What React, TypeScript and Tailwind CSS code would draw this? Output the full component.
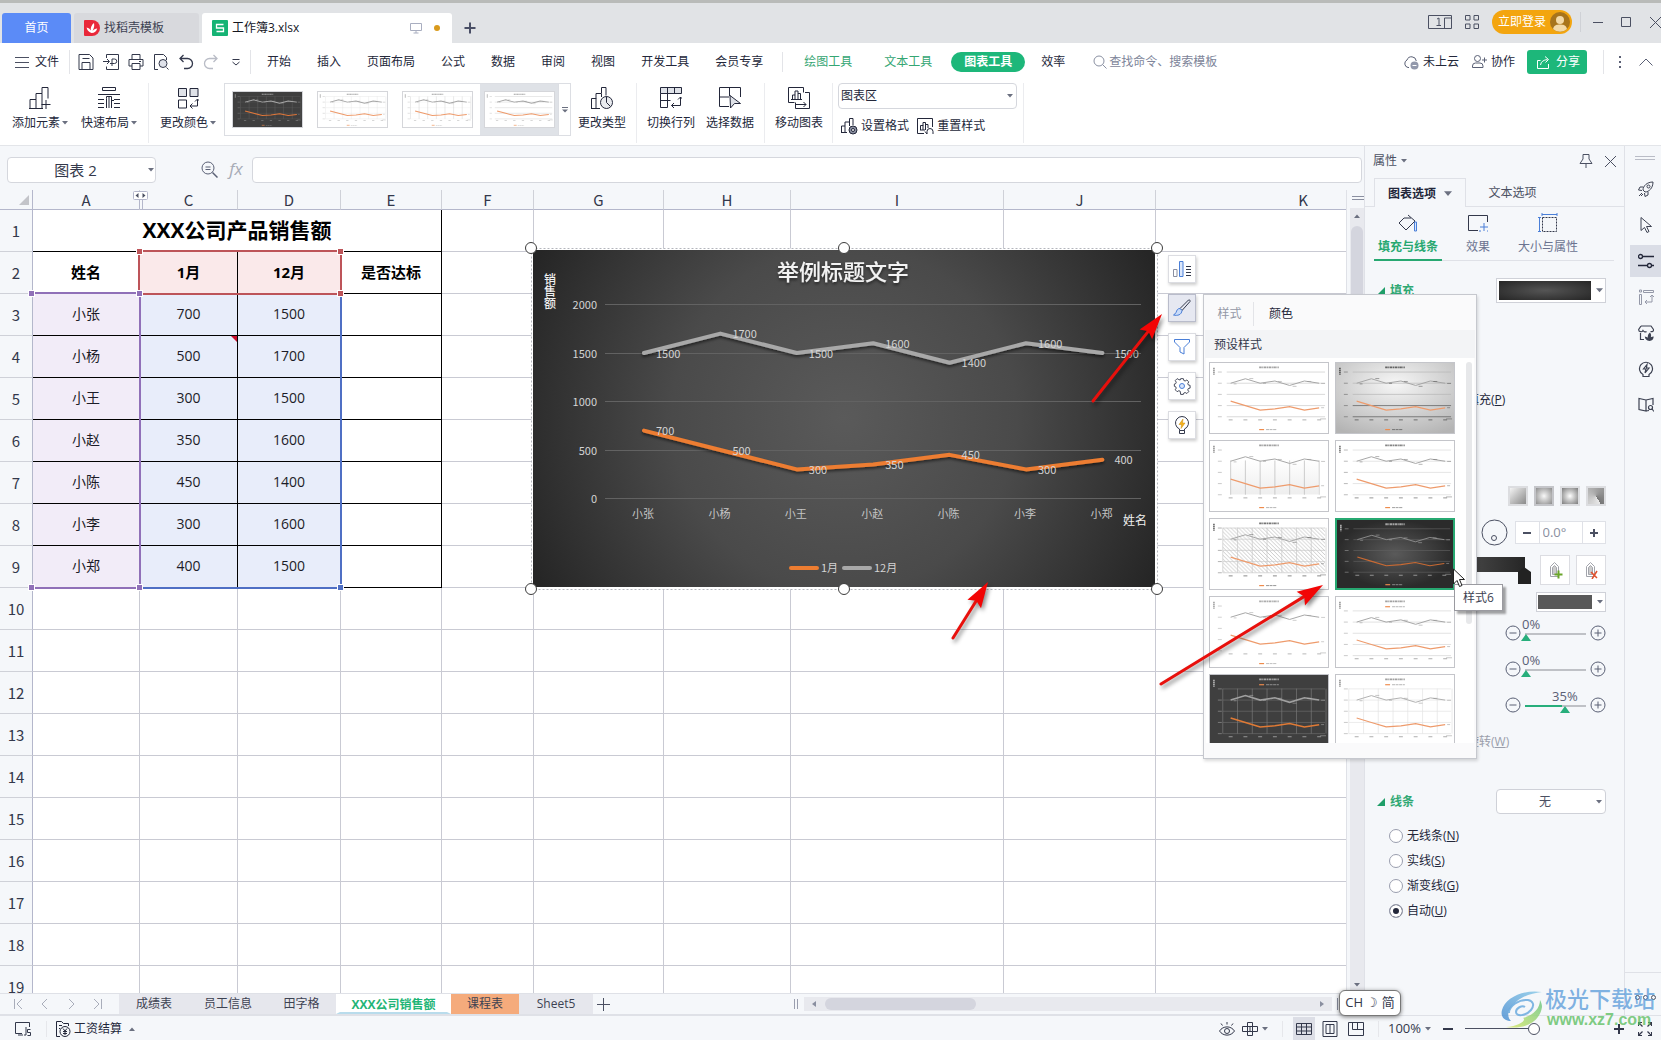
import React from 'react';

type P = { children?: React.ReactNode; className?: string };

function Ico({ s = 16, w, vb = '0 0 16 16', sw = 1, className = '', children }: P & { s?: number; w?: number; vb?: string; sw?: number }) {
  return (
    <svg aria-hidden="true" width={w ?? s} height={s} viewBox={vb} fill="none" stroke="currentColor" strokeWidth={sw} className={`shrink-0 ${className}`}>
      {children}
    </svg>
  );
}

function Caret({ className = 'text-[#6b7080]', up = false, s = 6 }: { className?: string; up?: boolean; s?: number }) {
  return (
    <svg aria-hidden="true" width={s} height={s - 2} viewBox="0 0 6 4" className={`shrink-0 ${className}`}>
      <path d={up ? 'M0 4h6L3 .5z' : 'M0 0h6L3 3.5z'} fill="currentColor" />
    </svg>
  );
}

function Sep({ className = 'h-6 bg-[#dfe0e4]' }: P) {
  return <span className={`w-px shrink-0 ${className}`} />;
}

const menus = ['开始', '插入', '页面布局', '公式', '数据', '审阅', '视图', '开发工具', '会员专享'];

function TitleBar() {
  return (
    <header className="flex h-[43px] shrink-0 items-end border-t-[3px] border-[#b9bbb9] bg-[#e1e3e6] pl-0.5">
      <button className="h-[30px] w-[69px] rounded-t-[3px] bg-[#5b8bf7] text-white">首页</button>
      <button className="ml-[3px] flex h-[30px] w-[125px] items-center gap-1 rounded-t-[3px] bg-[#d8d9dd] pl-2.5 text-[#3d4252]">
        <Ico s={16} className="text-white">
          <path d="M1 0h7a8 8 0 0 1 0 16H1a1 1 0 0 1-1-1V1a1 1 0 0 1 1-1z" fill="#e9283a" stroke="none" />
          <path d="M7.500 13C4.500 12 3 10 2.600 7.500c2 .3 3.400 1.500 4.200 3C6.500 7.500 7.500 5 10 3c.5 2.500.3 5-1.500 8 1.200-1.500 2.700-2.500 4.700-2.600-.5 2.800-2.700 4.300-5.700 4.600z" fill="#fff" stroke="none" />
        </Ico>
        找稻壳模板
      </button>
      <div className="ml-[3px] flex h-[30px] w-[250px] items-center rounded-t-[3px] bg-white pl-2.5 text-[#15171f]">
        <Ico s={16}>
          <rect width="16" height="16" rx="1" fill="#15b374" stroke="none" />
          <path d="M11.500 4.500h-7v3.500h7v3.500h-7" stroke="#fff" strokeWidth="1.300" />
        </Ico>
        <span className="ml-1 flex-1 text-left">工作簿3.xlsx</span>
        <Ico s={12} vb="0 0 12 12" className="text-[#a9aec0]">
          <path d="M.5 1.500h11v7H.5zM3.500 11h5M6 8.500V11" />
        </Ico>
        <span className="mx-3 size-1.5 rounded-full bg-[#d99a1c]" />
      </div>
      <button aria-label="新建" className="ml-3 grid h-[30px] w-3 place-items-center text-[#4a4f66]">
        <Ico s={12} vb="0 0 12 12" sw={2}><path d="M6 .5v11M.5 6h11" /></Ico>
      </button>
      <div className="ml-auto flex h-10 items-center pb-0.5 text-[#4b5062]">
        <button aria-label="窗口布局"><Ico w={24} s={14} vb="0 0 24 14"><path d="M.5.5h23v13H.5zM16.500 13.500V3h7M9 4l2-1v7.500M8.500 10.500H13" /></Ico></button>
        <button aria-label="应用" className="ml-[13px]"><Ico s={14} vb="0 0 14 14"><path d="M.5.5h4.500v4.500H.5zM9 .5h4.500v4.500H9zM.5 9h4.500v4.500H.5zM9 9h4.500v4.500H9z" /></Ico></button>
        <button className="ml-[13px] flex h-6 w-20 items-center gap-1 rounded-full bg-[#f3a50f] pl-1.5 text-white">
          立即登录
          <Ico s={20} vb="0 0 20 20">
            <circle cx="10" cy="10" r="10" fill="#a8741c" stroke="none" />
            <circle cx="10" cy="8" r="4" fill="#f3d9a8" stroke="none" />
            <path d="M3 17c1-4 4-4.500 7-4.500s6 .5 7 4.500a10 10 0 0 1-14 0z" fill="#f3d9a8" stroke="none" />
          </Ico>
        </button>
        <Sep className="ml-2 h-5 bg-[#cfd1d6]" />
        <button aria-label="最小化" className="ml-3"><Ico s={10} vb="0 0 10 10"><path d="M0 5.500h10" /></Ico></button>
        <button aria-label="最大化" className="ml-[18px]"><Ico s={10} vb="0 0 10 10"><path d="M.5.5h9v9h-9z" /></Ico></button>
        <button aria-label="关闭" className="ml-[19px]"><Ico s={11} vb="0 0 11 11"><path d="M0 0l11 11M11 0L0 11" /></Ico></button>
      </div>
    </header>
  );
}

function MenuBar() {
  return (
    <nav className="flex h-[37px] shrink-0 items-center bg-white pt-px pl-[15px] text-[#23273a]">
      <button className="flex items-center gap-1.5">
        <Ico s={14} vb="0 0 14 14" className="text-[#4b5062]"><path d="M0 2.500h14M0 7.500h14M0 12.500h14" /></Ico>文件
      </button>
      <Sep className="mr-2 ml-2.5 h-6 bg-[#e3e4e8]" />
      <div className="flex items-center gap-[9px] text-[#33384b]">
        <button aria-label="保存"><Ico><path d="M1 .5h10.500l3.500 3.500V15.500H1zM4 15.500V8.500h8v7M4.500 4.500h7" /></Ico></button>
        <button aria-label="输出"><Ico><path d="M3.500 4V.5h12v15h-12v-3M0 7.500h6M4 5l2.500 2.500L4 10M9 12V5h2.500a2.200 2.200 0 0 1 0 4.500H7" /></Ico></button>
        <button aria-label="打印"><Ico><path d="M4 5V.5h8V5M4 12H1V5.500h14V12h-3M4 9.500h8v6H4zM11 7.500h2" /></Ico></button>
        <button aria-label="打印预览"><Ico><path d="M5 15.500H1.500V.5h9l3 3V6M13.500 13.500l2 2" /><circle cx="10" cy="9.500" r="4" fill="#dfe2ea" /></Ico></button>
        <button aria-label="撤销"><Ico sw={1.3}><path d="M5.500 1L2 4.500 5.500 8M2 4.500h7.500a5 5 0 0 1 0 10H6" /></Ico></button>
        <button aria-label="恢复" className="text-[#b9bcc6]"><Ico sw={1.3}><path d="M10.500 1L14 4.500 10.500 8M14 4.500H6.500a5 5 0 0 0 0 10H10" /></Ico></button>
        <button aria-label="自定义"><Ico><path d="M4.500 5.500h7M4.500 8L8 11l3.500-3" /></Ico></button>
      </div>
      <Sep className="ml-1.5 h-6 bg-[#e3e4e8]" />
      <div className="ml-[3px] flex">
        {menus.map((m) => <button key={m} className="px-[13px]">{m}</button>)}
      </div>
      <Sep className="ml-1.5 h-5 bg-[#e3e4e8]" />
      <button className="ml-[21px] text-[#35a673]">绘图工具</button>
      <button className="ml-8 text-[#35a673]">文本工具</button>
      <button className="ml-[19px] h-5 rounded-full bg-[#1db77a] px-[13px] font-bold text-white">图表工具</button>
      <button className="ml-4">效率</button>
      <label className="ml-7 flex items-center gap-0.5 text-[#8a90a2]">
        <Ico s={14} vb="0 0 14 14"><circle cx="6" cy="6" r="5" /><path d="M9.500 9.500l4 4" /></Ico>
        <input aria-label="查找命令" placeholder="查找命令、搜索模板" className="w-[116px] bg-transparent outline-none placeholder:text-[#7d8499]" />
      </label>
      <div className="ml-auto flex items-center">
        <button className="flex items-center gap-1">
          <Ico className="text-[#5a6075]"><path d="M6 13.500H5A4 4 0 0 1 4 6a4.800 4.800 0 0 1 9.300 1" /><circle cx="11.500" cy="11.500" r="4" fill="#9298ab" stroke="none" /><path d="M9.500 11.500h4" stroke="#fff" /></Ico>未上云
        </button>
        <button className="ml-3 flex items-center gap-1">
          <Ico className="text-[#5a6075]"><circle cx="6.500" cy="4.500" r="3" /><path d="M1.500 13.500V12a3 3 0 0 1 3-3H9a3 3 0 0 1 3 3v1.500zM11 6h5M13.500 3.500v5" /></Ico>协作
        </button>
        <button className="ml-3 flex h-6 w-[60px] items-center gap-1.5 rounded-[3px] bg-[#1db77a] pl-2.5 text-white">
          <Ico s={13} vb="0 0 13 13"><path d="M3.500 4.500h-3v8h11V8M3.500 9c.5-3.500 3-5 7-5.500M8 .5l3.500 3L8.500 6.500" /></Ico>分享
        </button>
        <Sep className="ml-4 h-6 bg-[#e3e4e8]" />
        <button aria-label="更多" className="ml-[15px] flex flex-col gap-[3px]">
          {[0, 1, 2].map((i) => <span key={i} className="size-0.5 bg-[#5a6075]" />)}
        </button>
        <button aria-label="收起" className="mr-2 ml-[18px]"><Ico s={14} vb="0 0 14 14" className="text-[#5a6075]"><path d="M.5 10.500L7 4l6.500 6.500" /></Ico></button>
      </div>
    </nav>
  );
}

function Big({ label, caret, children }: { label: string; caret?: boolean; children: React.ReactNode }) {
  return (
    <button className="flex h-12 flex-col items-center justify-between text-[#23273a]">
      <Ico s={22} vb="0 0 22 22" className="mt-1">{children}</Ico>
      <span className="flex items-center gap-0.5 leading-4">{label}{caret && <Caret />}</span>
    </button>
  );
}

type ThumbKind = { bg: string; h?: string; v?: string; mark?: string; gray?: string; org?: string; hatch?: boolean; thick?: number; area?: boolean; top?: boolean };
const jan = [700, 500, 300, 350, 450, 300, 400];
const dec = [1500, 1700, 1500, 1600, 1400, 1600, 1500];

function Thumb({ k, id, className }: { k: ThumbKind; id: string; className: string }) {
  const dy = k.top ? 5 : 0;
  const pts = (a: number[]) => a.map((v, i) => `${21 + i * 15},${55.3 + dy - v * 0.023}`).join(' ');
  const mark = k.mark ?? '#8a8a8a';
  return (
    <svg aria-hidden="true" viewBox="0 0 120 72" preserveAspectRatio="none" className={className}>
      <defs>
        <radialGradient id={`${id}d`}><stop offset="0" stopColor="#5a5a5a" /><stop offset="1" stopColor="#2b2b2b" /></radialGradient>
        <radialGradient id={`${id}l`} cx="0.5" cy="0.3" r="0.8"><stop offset="0" stopColor="#f6f6f6" /><stop offset="1" stopColor="#b4b4b4" /></radialGradient>
        <pattern id={`${id}h`} width="4" height="4" patternUnits="userSpaceOnUse"><path d="M0 0l4 4" stroke="#b5b5b5" strokeWidth="0.700" /></pattern>
        <linearGradient id={`${id}a`} x2="0" y2="1"><stop offset="0" stopColor="#fff" /><stop offset="1" stopColor="#eee" /></linearGradient>
      </defs>
      <rect width="120" height="72" fill={k.bg === 'dark' ? `url(#${id}d)` : k.bg === 'light' ? `url(#${id}l)` : k.bg} />
      {k.hatch && <rect x="13" y="9" width="104" height="46" fill={`url(#${id}h)`} />}
      {k.area && <rect x="21" y="18" width="89" height="37" fill={`url(#${id}a)`} />}
      {k.h && [0, 1, 2, 3, 4].map((i) => <path key={i} d={`M${k.v ? 13 : 17} ${9.3 + dy + i * 11.5}H117`} stroke={k.bg === 'light' && i > 2 ? '#555' : k.h} strokeWidth="0.700" />)}
      {k.v && [0, 1, 2, 3, 4, 5, 6, 7].map((i) => <path key={i} d={`M${(k.area ? 21 : 13) + i * 15} ${(k.area ? 20 : 9) + dy}V${55.3 + dy}`} stroke={k.v} strokeWidth="0.700" visibility={k.area && i === 7 ? 'hidden' : 'visible'} />)}
      <polyline points={pts(dec)} fill="none" stroke={k.gray ?? '#a5a5a5'} strokeWidth={k.thick ?? 1} />
      <polyline points={pts(jan)} fill="none" stroke={k.org ?? '#ee9b6c'} strokeWidth={k.thick ?? 1.2} />
      <path d="M50 4.500h20" stroke={mark} strokeWidth="2" strokeDasharray="2.600 .5 1.200 .5" opacity=".8" />
      <path d="M4 5v7" stroke={mark} strokeWidth="1.500" strokeDasharray="1.500 .5" />
      <path d={`M19 ${58.5 + dy}h96`} stroke={mark} strokeWidth="1" strokeDasharray="4 11" opacity=".7" />
      <path d={k.top ? 'M50 10h5' : 'M50 68.500h5'} stroke="#ee8b4c" strokeWidth="1.200" />
      <path d={k.top ? 'M57 10h13' : 'M57 68.500h11'} stroke={mark} strokeWidth="0.900" strokeDasharray="3 .6" opacity=".7" />
      {[0, 1, 2, 3, 4].map((i) => <path key={i} d={`M8 ${9.3 + dy + i * 11.5}h4`} stroke={mark} strokeWidth="0.900" opacity=".5" />)}
      <path d={`M24 ${21.5 + dy}h3M40 ${16 + dy}h4M54 ${21 + dy}h3M69 ${19 + dy}h4M84 ${24 + dy}h4M99 ${19 + dy}h4M113 ${21 + dy}h4M113 ${46 + dy}h3M112 ${57.5 + dy}h6`} stroke={mark} strokeWidth="0.800" opacity=".6" />
    </svg>
  );
}

const gallery: ThumbKind[] = [
  { bg: '#3f3f3f', h: '#5c5c5c', v: '#6a6a6a', mark: '#bbb', gray: '#a8a8a8', org: '#e0773a', thick: 2 },
  { bg: '#fff', h: '#e2e2e2', v: '#e2e2e2', thick: 2 },
  { bg: '#fff', h: '#eee', v: '#c4c4c4', thick: 2 },
  { bg: '#fff', h: '#c4c4c4', thick: 2 },
];

function Ribbon() {
  return (
    <div className="flex h-[66px] shrink-0 items-start border-b border-[#e3e5e9] bg-white pt-[3px] pl-3">
      <Big label="添加元素" caret><path d="M1 21.500V12.500h6v9M7 12.500V6.500h6v15M13 6.500V.5h6v11M0 21.500h14M17 13v9M12.500 17.500h9" /></Big>
      <div className="ml-[13px]" />
      <Big label="快速布局" caret><path d="M4.500.5h13v3h-13zM0 7.500h22M0 12.500h6M0 16.500h6M0 20.500h6M16 12.500h6M16 16.500h6M16 20.500h6M8.500 21V11.500M8.500 11.500v-2h5V21M11 9V21M14 13.500h2" /></Big>
      <Sep className="mr-[11px] ml-[11px] h-[60px] bg-[#ebecef]" />
      <Big label="更改颜色" caret><path d="M1.500 1.500h8v8h-8zM13 1.500h8v8h-8z" fill="#dfe2e8" /><path d="M1.500 13h8v8h-8zM20.500 12.500v6.500h-7M18 14.500l2.500-2.500 2.500 2.500M15.500 16.500L13 19l2.500 2.500" /></Big>
      <div className="ml-2 flex h-[53px] border border-[#dcdee3]">
        {gallery.map((k, i) => (
          <button key={i} aria-label={`图表样式${i + 1}`} className={i === 3 ? 'grid w-[78px] place-items-center bg-[#dfe2e7]' : 'grid w-[85px] place-items-center'}>
            <Thumb k={k} id={`g${i}`} className="h-[37px] w-[71px] border border-[#d5d6da]" />
          </button>
        ))}
        <button aria-label="更多样式" className="grid w-3 place-items-center border-l border-[#dcdee3]">
          <Ico s={6} vb="0 0 6 6" className="text-[#6b7080]"><path d="M0 .5h6" /><path d="M0 2.500h6L3 5.500z" fill="currentColor" stroke="none" /></Ico>
        </button>
      </div>
      <div className="w-[7px]" />
      <Big label="更改类型"><path d="M.5 21V11.500h4.500V21M5 12V6.500h5.500V.5H15v8M0 21.500h9M10.500 7v3" /><circle cx="15.500" cy="15.500" r="6" fill="#e9ebef" /><path d="M15.500 9.500v6l4 4" /></Big>
      <Sep className="mx-[10px] h-[60px] bg-[#ebecef]" />
      <Big label="切换行列"><path d="M.5.500h21v6H.5z" fill="#dfe2e8" /><path d="M.5 6.500v14h7M7.500.5v20M14.500.5v6M.5 13.500h10M20.500 10v8.500h-9M18 12.500l2.500-2.500 2.500 2.500M14 16l-2.500 2.500L14 21" /></Big>
      <div className="w-[11px]" />
      <Big label="选择数据"><path d="M10 19.500H.5V.5h21V10M.5 10h9.500M10.500.5V9" /><path d="M11 8.500l10.500 8h-6L11.500 21z" fill="#dfe2e8" /></Big>
      <Sep className="mx-[10px] h-[60px] bg-[#ebecef]" />
      <Big label="移动图表"><path d="M15.500 5.500V.5H.5v15h6M17 5.500h4.500v16h-14v-6M3 12.500h11M4.500 12.500V8h2.500v4.500M7 8V4h3v8.500M10 6.500h2.500v6M7 17.500h11M15.500 15l2.500 2.500-2.500 2.500" /></Big>
      <Sep className="mr-[5px] ml-[9px] h-[60px] bg-[#ebecef]" />
      <div className="flex flex-col gap-2 text-[#23273a]">
        <div className="relative w-[179px]">
          <select aria-label="图表元素" className="h-[26px] w-full appearance-none rounded-sm border border-[#d5d7dd] bg-white pl-0.5 outline-none"><option>图表区</option></select>
          <span className="pointer-events-none absolute top-[11px] right-1"><Caret /></span>
        </div>
        <div className="flex gap-2 pl-[3px]">
          <button className="flex items-center gap-[3px] leading-[18px]">
            <Ico s={17} vb="0 0 17 17"><path d="M.5 14.500V8h3.500v6.500M4 8V4h4.500V.5H12V7M0 14.500h6M8.500 4v4" /><circle cx="12" cy="12" r="4" fill="#8a8fa0" /><circle cx="12" cy="12" r="1.500" fill="#fff" /></Ico>设置格式
          </button>
          <button className="flex items-center gap-[3px] leading-[18px]">
            <Ico s={17} vb="0 0 17 17"><path d="M7 15.500H.5V.5h15V9M3.500 12V7.500H6V12M6 8V4.500h2.500V12M8.500 6.500H11V10M3 12h5M10 16v-2.500a3 3 0 0 1 6 0V16M8 13.500l2 2.500" /></Ico>重置样式
          </button>
        </div>
      </div>
      <Sep className="ml-1.5 h-[60px] bg-[#ebecef]" />
    </div>
  );
}

function FormulaBar() {
  return (
    <div className="flex h-11 shrink-0 items-start pt-[11px] pr-0.5 pl-[7px]">
      <div className="relative w-[149px]">
        <input aria-label="名称框" defaultValue="图表 2" className="h-[26px] w-full rounded-sm border border-[#d5d7dd] bg-white pr-3 pb-px text-center text-[15px] text-[#33384b] outline-none" />
        <span className="pointer-events-none absolute top-[11px] right-0.5"><Caret /></span>
      </div>
      <button aria-label="缩小" className="mt-1 ml-[45px] text-[#5a6075]"><Ico s={17} vb="0 0 17 17"><circle cx="7" cy="7" r="6" /><path d="M11.500 11.500l5 5" strokeWidth="1.500" /><path d="M4.500 6h5M4.500 8.500h5" /></Ico></button>
      <button aria-label="插入函数" className="ml-2.5 w-4 text-[17px] leading-6 text-[#a7abb6] italic">fx</button>
      <input aria-label="编辑栏" className="ml-2 h-[26px] min-w-0 flex-1 rounded-sm border border-[#d5d7dd] bg-white px-2 outline-none" />
    </div>
  );
}

const people = ['小张', '小杨', '小王', '小赵', '小陈', '小李', '小郑'];
const cols = ['A', 'C', 'D', 'E', 'F', 'G', 'H', 'I', 'J'];
const K = 'border-black';
const G = 'border-[#c9cad3]';

function Sheet() {
  return (
    <table className="w-full table-fixed border-separate border-spacing-0 bg-white">
      <colgroup>
        <col className="w-[33px]" /><col className="w-[107px]" /><col className="w-[98px]" /><col className="w-[103px]" /><col className="w-[101px]" />
        <col className="w-[92px]" /><col className="w-[130px]" /><col className="w-[127px]" /><col className="w-[213px]" /><col className="w-[152px]" /><col />
      </colgroup>
      <thead>
        <tr className="h-5 bg-[#f5f7fa] font-[Noto_Sans_CJK_SC] text-[15px] leading-[19px] text-[#33384b]">
          <th className="border-r border-b border-[#b4b7cb] p-0"><svg aria-hidden="true" width="10" height="10" className="mr-[3px] ml-auto"><path d="M10 0v10H0z" fill="#c3c4c9" /></svg></th>
          {cols.map((c) => <th key={c} scope="col" className="border-r border-b border-r-[#cfd1d8] border-b-[#b4b7cb] p-0 font-normal">{c}</th>)}
          <th scope="col" className="border-b border-[#b4b7cb] p-0 pl-[104px] font-normal">K</th>
        </tr>
      </thead>
      <tbody className="text-center text-[14px] leading-5 text-[#1c1c28]">
        {Array.from({ length: 19 }, (_, i) => i + 1).map((r) => {
          const p = r - 3;
          return (
            <tr key={r} className="h-[42px]">
              <th scope="row" className="border-r border-b border-r-[#b4b7cb] border-b-[#cfd1d8] bg-[#f5f7fa] p-0 pt-px font-[Noto_Sans_CJK_SC] text-[15px] font-normal text-[#33384b]">{r}</th>
              {r === 1 && <td colSpan={4} className={`border-r border-b p-0 pb-0.5 text-[21px] font-bold text-black ${K}`}>XXX公司产品销售额</td>}
              {r === 2 && (
                <>
                  <td className={`border-r border-b p-0 pb-px text-[15px] font-bold text-black ${K}`}>姓名</td>
                  <td className={`border-r border-b bg-[#fae9ea] p-0 pb-px text-[15px] font-bold text-black ${K}`}>1月</td>
                  <td className={`border-r border-b bg-[#fae9ea] p-0 pb-px text-[15px] font-bold text-black ${K}`}>12月</td>
                  <td className={`border-r border-b p-0 pb-px text-[15px] font-bold text-black ${K}`}>是否达标</td>
                </>
              )}
              {r > 2 && r < 10 && (
                <>
                  <td className={`border-r border-b bg-[#f2ecf8] p-0 pb-0.5 ${K}`}>{people[p]}</td>
                  <td className={`relative border-r border-b bg-[#e8edfa] p-0 pb-0.5 ${K}`}>
                    {jan[p]}
                    {r === 4 && <svg aria-hidden="true" width="6" height="6" className="absolute top-0 right-0"><path d="M0 0h6v6z" fill="#c8102e" /></svg>}
                  </td>
                  <td className={`border-r border-b bg-[#e8edfa] p-0 pb-0.5 ${K}`}>{dec[p]}</td>
                  <td className={`border-r border-b p-0 ${K}`} />
                </>
              )}
              {r > 9 && [0, 1, 2, 3].map((i) => <td key={i} className={`border-r border-b p-0 ${G}`} />)}
              {[0, 1, 2, 3, 4].map((i) => <td key={`r${i}`} className={`border-r border-b p-0 ${G}`} />)}
              <td className={`border-b p-0 ${G}`} />
            </tr>
          );
        })}
      </tbody>
    </table>
  );
}

function Handle({ className = '' }: P) {
  return <span className={`absolute size-[7px] border border-white ${className}`} />;
}

function Ranges() {
  return (
    <>
      <div className="pointer-events-none absolute top-[103px] left-[139px] h-[296px] w-[203px] border-r-2 border-b-2 border-[#4f6fc4]"><Handle className="-right-1 -bottom-1 bg-[#4f6fc4]" /></div>
      <div className="pointer-events-none absolute top-[102px] left-[32px] h-[297px] w-[109px] border-y-2 border-r-2 border-[#9070b8]">
        <Handle className="-right-1 -bottom-1 bg-[#9070b8]" /><Handle className="-bottom-1 -left-1 bg-[#9070b8]" /><Handle className="-top-1 -left-1 bg-[#9070b8]" />
      </div>
      <div className="pointer-events-none absolute top-[60px] left-[138px] h-[45px] w-[204px] border-2 border-[#bd5459]">
        <Handle className="-top-1 -left-1 bg-[#bd5459]" /><Handle className="-top-1 -right-1 bg-[#bd5459]" /><Handle className="-right-1 -bottom-1 bg-[#bd5459]" /><Handle className="-bottom-1 -left-1 bg-[#9070b8]" />
      </div>
      <svg aria-hidden="true" width="15" height="18" className="absolute top-px left-[133px]" stroke="#b4b7cb">
        <rect x=".5" y=".5" width="14" height="8" rx="1" fill="#fff" /><path d="M5.500 2v5L2.500 4.500zM9.500 2v5l3-2.500z" fill="#4b5062" stroke="none" /><path d="M6.500 9v9M9.500 9v9" />
      </svg>
    </>
  );
}

function Chart() {
  const px = (i: number) => 111 + i * 76.4;
  const py = (v: number) => 250 - v * 0.097;
  const line = (a: number[]) => a.map((v, i) => `${px(i)},${py(v) - 1.5}`).join(' ');
  return (
    <svg role="img" aria-label="举例标题文字" viewBox="-10 -10 642 357" className="absolute top-[50px] left-[523px] h-[357px] w-[642px] font-[Noto_Sans_CJK_SC]" fontSize="11" fill="#d4d4d4">
      <defs>
        <radialGradient id="cbg" gradientUnits="userSpaceOnUse" cx="311" cy="168" r="345"><stop offset="0" stopColor="#5a5a5a" /><stop offset=".5" stopColor="#4a4a4a" /><stop offset="1" stopColor="#262626" /></radialGradient>
        <filter id="sh" x="-10%" y="-30%" width="120%" height="180%"><feDropShadow dx="0" dy="2" stdDeviation="1.500" floodOpacity=".55" /></filter>
      </defs>
      <rect x="-1.500" y="-1.500" width="626" height="341" fill="#fff" stroke="#b4b6bd" strokeDasharray="2 2" />
      <rect width="622" height="337" fill="url(#cbg)" />
      <text x="310" y="30" textAnchor="middle" fontSize="22" fontWeight="500" fill="#f2f2f2" filter="url(#sh)">举例标题文字</text>
      <text x="17" y="23" fontWeight="500" fontSize="12" fill="#f0f0f0" className="[writing-mode:vertical-rl]">销售额</text>
      {[0, 500, 1000, 1500, 2000].map((v) => (
        <g key={v}><path d={`M72 ${Math.round(py(v)) - 1.5}H608`} stroke="#626262" /><text x="64" y={py(v) + 3} textAnchor="end">{v}</text></g>
      ))}
      <polyline points={line(dec)} fill="none" stroke="#a8a8a8" strokeWidth="4" strokeLinecap="round" strokeLinejoin="round" filter="url(#sh)" />
      <polyline points={line(jan)} fill="none" stroke="#ed7d31" strokeWidth="4" strokeLinecap="round" strokeLinejoin="round" filter="url(#sh)" />
      {dec.map((v, i) => <text key={i} x={px(i) + 12} y={py(v) + 3}>{v}</text>)}
      {jan.map((v, i) => <text key={i} x={px(i) + 12} y={py(v) + 3}>{v}</text>)}
      {people.map((t, i) => <text key={t} x={px(i) - 1} y="268" textAnchor="middle" fill="#c4c4c4">{t}</text>)}
      <text x="602" y="275" textAnchor="middle" fontSize="12" fill="#f0f0f0">姓名</text>
      <path d="M258 318h26" stroke="#ed7d31" strokeWidth="4" strokeLinecap="round" /><text x="288" y="322">1月</text>
      <path d="M311 318h26" stroke="#a8a8a8" strokeWidth="4" strokeLinecap="round" /><text x="341" y="322">12月</text>
      {[[-2, -2], [311, -2], [624, -2], [-2, 339], [311, 339], [624, 339]].map(([x, y]) => <circle key={`${x}${y}`} cx={x} cy={y} r="5.500" fill="#fff" stroke="#3c3c3c" />)}
    </svg>
  );
}

function ChartButtons() {
  const b = 'grid size-7 place-items-center border shadow-[1px_2px_3px_rgba(0,0,0,0.2)]';
  return (
    <div className="absolute top-[65px] left-[1168px] flex flex-col gap-[11px] text-[#33384b]">
      <button aria-label="图表元素按钮" className={`${b} border-[#dcdde2] bg-white`}><Ico s={18} vb="0 0 18 18"><path d="M.5 16.500v-7H4v7z" stroke="#8a8fa0" /><path d="M6.500 16.500V1.500H10v15z" stroke="#4a7fd8" fill="#dbe7fb" /><path d="M13 6.500h5M13 9.500h5M13 12.500h5M13 15.500h5" /></Ico></button>
      <button aria-label="图表样式按钮" className={`${b} border-[#b9bccb] bg-[#e6e8f1]`}><Ico s={18} vb="0 0 18 18"><path d="M7 9.500L15.500 1c1-.5 2 .5 1.500 1.500L9 11.500z" /><path d="M7 9.500c-3 0-3 2-4 4-.5 1-1.500 2-2.500 2.500 4 1 8 0 8.500-4.500z" stroke="#4a7fd8" fill="#c9dbf9" /></Ico></button>
      <button aria-label="图表筛选" className={`${b} border-[#dcdde2] bg-white`}><Ico s={18} vb="0 0 18 18" className="text-[#4a7fd8]"><path d="M1.500 1.500h15V4L11 9.500V16l-4-2V9.500L1.500 4z" /></Ico></button>
      <button aria-label="图表设置" className={`${b} border-[#dcdde2] bg-white`}><Ico s={18} vb="0 0 18 18"><path d="M7.500 1.500h3l.5 2 1.500.6 1.900-1.100 2.100 2.100-1.100 1.900.6 1.500 2 .5v3l-2 .5-.6 1.500 1.100 1.900-2.100 2.100-1.900-1.100-1.500.6-.5 1.500h-3L7 15.500l-1.500-.6-1.900 1.100-2.100-2.100 1.100-1.900L2 10.500l-1.500-.5V7.500L2 7l.6-1.500L1.500 3.600l2.100-2.100 1.900 1.100L7 3z" transform="translate(.9 .3) scale(.9)" /><circle cx="9" cy="9" r="2.500" stroke="#4a7fd8" fill="#dbe7fb" /></Ico></button>
      <button aria-label="智能推荐" className={`${b} border-[#dcdde2] bg-white`}><Ico s={18} vb="0 0 18 18"><path d="M6.500 14.500v-1.500a6.500 6.500 0 1 1 5 0v1.500zM7 17.500h4M6.500 14.500v3h5v-3" /><path d="M10 3L6 8.500h2.500L8 12.500 12 7H9.500z" fill="#f6b21b" stroke="#c98a0a" strokeWidth=".5" /></Ico></button>
    </div>
  );
}

const presets: ThumbKind[] = [
  { bg: '#fff', h: '#c9c9c9' },
  { bg: 'light', h: '#b5b5b5', mark: '#444' },
  { bg: '#fff', v: '#b9b9b9', area: true },
  { bg: '#fff', h: '#d9d9d9', mark: '#666' },
  { bg: '#fff', h: '#c9c9c9', v: '#c9c9c9', hatch: true, mark: '#555' },
  { bg: 'dark', h: '#5e5e5e', mark: '#c0c0c0', gray: '#8d8d8d', org: '#c96a33' },
  { bg: '#fff', mark: '#999' },
  { bg: '#fff', h: '#d4d4d4', top: true },
  { bg: '#3f3f3f', h: '#6a6a6a', v: '#7a7a7a', mark: '#c0c0c0', gray: '#a0a0a0', org: '#e07a35', thick: 1.6, top: true },
  { bg: '#fff', h: '#e3e3e3', v: '#e3e3e3', top: true, gray: '#b0b0b0' },
];

function StylePopup() {
  return (
    <section aria-label="图表样式" className="absolute top-[104px] left-[1203px] flex h-[465px] w-[274px] flex-col border border-[#c6c8ce] bg-[#fafafb] pb-[15px] shadow-[1px_2px_3px_rgba(0,0,0,0.15)]">
      <div className="flex h-[35px] shrink-0 items-center pt-0.5 text-[#23273a]">
        <button className="w-[49px] pl-0.5 text-[#9498a6]">样式</button>
        <Sep className="h-6 bg-[#e3e4e8]" />
        <button className="w-[54px]">颜色</button>
      </div>
      <h3 className="mx-px h-7 shrink-0 bg-[#f3f4f6] pt-px pl-[9px] leading-7 text-[#33384b]">预设样式</h3>
      <div className="mx-0.5 flex min-h-0 flex-1 justify-between overflow-hidden bg-white pt-1 pr-0.5 pl-[3px]">
        <div className="grid h-max grid-cols-2 gap-1.5">
          {presets.map((k, i) => (
            <button key={i} aria-label={`样式${i + 1}`} className={i === 5 ? 'h-[72px] w-[120px] border-2 border-[#27a871]' : 'h-[72px] w-[120px] border border-[#c4c5ca]'}>
              <Thumb k={k} id={`p${i}`} className="size-full" />
            </button>
          ))}
        </div>
        <span className="h-[262px] w-1.5 rounded-full bg-[#e7e8ea]" />
      </div>
    </section>
  );
}

function Arrow({ x1, y1, x2, y2 }: { x1: number; y1: number; x2: number; y2: number }) {
  const a = Math.atan2(y2 - y1, x2 - x1);
  const at = (d: number, o: number) => `${x2 - d * Math.cos(a) + o * Math.sin(a)},${y2 - d * Math.sin(a) - o * Math.cos(a)}`;
  const [bx, by] = at(18, 0).split(',');
  return (
    <g>
      <line x1={x1} y1={y1} x2={bx} y2={by} stroke="#e8100c" strokeWidth="3" strokeLinecap="round" />
      <polygon points={`${x2},${y2} ${at(26, 8)} ${at(22, 0)} ${at(26, -8)}`} fill="#f20505" />
    </g>
  );
}

function Annotations() {
  return (
    <>
      <svg aria-hidden="true" width="560" height="420" className="pointer-events-none absolute top-[110px] left-[940px] drop-shadow-[2px_3px_2px_rgba(0,0,0,0.45)]">
        <Arrow x1={153} y1={101} x2={222} y2={14} />
        <Arrow x1={13} y1={338} x2={48} y2={282} />
        <Arrow x1={221} y1={384} x2={383} y2={285} />
      </svg>
      <div role="tooltip" className="absolute top-[394px] left-[1454px] border border-[#9a9aa0] bg-white px-2 leading-[25px] whitespace-nowrap text-[#3d4252] shadow-[3px_3px_2px_rgba(0,0,0,0.35)]">样式6</div>
      <svg aria-hidden="true" width="13" height="20" className="absolute top-[378px] left-[1453px]"><path d="M.5 1v15l3.500-3.500 2.500 6 2.500-1-2.500-6h5z" fill="#fff" stroke="#222" /></svg>
    </>
  );
}

function SheetTabs() {
  const t = 'h-full bg-[#e6e7ed] text-[#3d4252]';
  return (
    <div className="flex h-[22px] shrink-0 items-center border-y border-[#dfe1e7]">
      <div className="flex w-[119px] gap-[14px] pl-[13px] text-[#a9adba]">
        {['M1.500 1v10M9 1L4 6l5 5', 'M8 1L3 6l5 5', 'M4 1l5 5-5 5', 'M10.500 1v10M3 1l5 5-5 5'].map((d) => <button key={d} aria-label="切换工作表"><Ico s={12} vb="0 0 12 12"><path d={d} /></Ico></button>)}
      </div>
      <button className={`${t} w-[70px]`}>成绩表</button>
      <button className={`${t} w-[78px]`}>员工信息</button>
      <button className={`${t} w-[69px]`}>田字格</button>
      <button className="h-full w-[115px] border-x-4 border-b-2 border-x-white border-b-[#b9dcec] bg-white pt-0.5 font-bold whitespace-nowrap text-[#1fb577]">XXX公司销售额</button>
      <button className="h-full w-[68px] bg-[#f5ab7c] text-[#3d4252]">课程表</button>
      <button className={`${t} w-[74px]`}>Sheet5</button>
      <button aria-label="新建工作表" className="ml-1 text-[#4b5062]"><Ico s={13} vb="0 0 13 13"><path d="M6.500 0v13M0 6.500h13" /></Ico></button>
      <span className="ml-auto h-2.5 w-1 border-x border-[#9a9eae]" />
      <div className="ml-1.5 flex h-3.5 w-[528px] items-center bg-[#e8e9ee] pl-2">
        <svg aria-hidden="true" width="4" height="6"><path d="M4 0v6L0 3z" fill="#8a8fa0" /></svg>
        <span className="ml-[9px] h-3 w-[151px] rounded-full bg-[#d4d5de]" />
        <svg aria-hidden="true" width="4" height="6" className="mr-2 ml-auto"><path d="M0 0v6l4-3z" fill="#8a8fa0" /></svg>
      </div>
      <span className="mr-[26px] ml-[5px] h-3 w-px bg-[#8a8fa0]" />
    </div>
  );
}

function Slider({ label, value }: { label: string; value: number }) {
  return (
    <div className="flex h-9 items-end justify-end gap-1 text-[#5a6075]">
      <button aria-label={`减少${label}`}><Ico s={16}><circle cx="8" cy="8" r="7" /><path d="M4.500 8h7" /></Ico></button>
      <div className="relative flex h-[30px] w-[61px] flex-col">
        <input type="range" aria-label={label} defaultValue={value} className="absolute inset-0 opacity-0" />
        <span className="mt-1 text-[13px] leading-[18px] whitespace-nowrap" style={{ paddingLeft: value ? 27 : 0, marginLeft: value ? 0 : -3 }}>{value}%</span>
        <span className="h-0.5 bg-[#bfc1c6]"><span className="block h-full bg-[#27ae7b]" style={{ width: value ? '60%' : '0%' }} /></span>
        <svg aria-hidden="true" width="10" height="7" className="-mt-px" style={{ marginLeft: value ? 35 : -4 }}><path d="M5 0l5 7H0z" fill="#27ae7b" /></svg>
      </div>
      <button aria-label={`增加${label}`}><Ico s={16}><circle cx="8" cy="8" r="7" /><path d="M4.500 8h7M8 4.500v7" /></Ico></button>
    </div>
  );
}

function Heading({ children }: P) {
  return (
    <h3 className="flex items-center gap-[5px] font-bold text-[#2fa873]">
      <svg aria-hidden="true" width="8" height="8"><path d="M8 0v8H0z" fill="#1f9e68" /></svg>{children}
    </h3>
  );
}

function Panel() {
  return (
    <aside className="flex w-[261px] shrink-0 flex-col border-x border-[#dfe1e7] bg-[#f5f7fa] text-[#4b5062]">
      <div className="flex h-8 shrink-0 items-center pr-2 pb-0.5 pl-2">
        <button className="flex items-center gap-1">属性 <Caret /></button>
        <button aria-label="固定" className="ml-auto"><Ico s={14} vb="0 0 14 14"><path d="M4 .5h6v4.500l3 4.500H1l3-4.500zM7 9.500V14" /></Ico></button>
        <button aria-label="关闭面板" className="ml-3"><Ico s={11} vb="0 0 11 11"><path d="M0 0l11 11M11 0L0 11" /></Ico></button>
      </div>
      <div className="flex h-[29px] shrink-0">
        <span className="w-[9px] border-b border-[#dfe1e7]" />
        <button className="flex w-[92px] items-center justify-center gap-2 border border-b-0 border-[#dfe1e7] pt-px font-bold text-[#23273a]">图表选项 <Caret s={8} /></button>
        <button className="flex-1 border-b border-[#dfe1e7] pt-0.5 pr-[65px]">文本选项</button>
      </div>
      <div className="mr-2.5 ml-[9px] flex h-[54px] shrink-0 border-b border-[#dfe1e7] text-[#6b7390]">
        <button className="-mb-px flex w-[68px] flex-col items-center gap-1 border-b-2 border-[#27a871] pt-1.5 font-bold text-[#27a871]"><Ico s={20} vb="0 0 20 20" className="text-[#33384b]"><path d="M10 2l7 6-9 9-7-7 5-5h7" /><path d="M16.500 9h2v9h-2z" stroke="#4a7fd8" fill="#dbe7fb" /></Ico><span className="leading-5">填充与线条</span></button>
        <button className="ml-4 flex w-10 flex-col items-center gap-1 pt-1.5"><Ico s={20} vb="0 0 20 20" className="text-[#33384b]"><path d="M10 17.500H.5v-15h19V9" /><path d="M16 10v8M12 14h8M11 18h2M19 18h1" stroke="#4a7fd8" /></Ico><span className="leading-5">效果</span></button>
        <button className="ml-4 flex w-[68px] flex-col items-center gap-1 pt-1.5"><Ico s={20} vb="0 0 20 20" className="text-[#33384b]"><path d="M4.500 4.500h14v14h-14z" strokeDasharray="2 1" /><path d="M4 1.500h15M4 0v3M19 0v3M1.500 4v15M0 4.500h3M0 18.500h3" stroke="#4a7fd8" /></Ico><span className="leading-5">大小与属性</span></button>
      </div>
      <div className="flex flex-col pr-[18px] pl-3">
        <div className="mt-[17px] flex h-[25px] items-center justify-between">
          <Heading>填充</Heading>
          <button aria-label="填充颜色" className="flex h-[25px] w-[110px] items-center gap-[5px] border border-[#cfd1d8] bg-white px-0.5">
            <span className="h-[19px] w-[92px] bg-radial from-[#555] to-[#262626]" /><Caret s={7} />
          </button>
        </div>
        <label className="mt-[85px] flex h-6 items-center gap-1 pl-3 text-[#23273a]">
          <input type="radio" name="fill" className="size-3.5" /><span className="whitespace-nowrap">图片或纹理填充(<u>P</u>)</span>
        </label>
        <div className="mt-[74px] flex justify-end gap-1.5">
          <button aria-label="线性渐变" className="size-5 border-2 border-[#dcdde0] bg-linear-to-br from-[#f4f4f4] to-[#8a8a8a]" />
          <button aria-label="射线渐变" className="size-5 border-2 border-[#c4c5c9] bg-radial from-[#f8f8f8] to-[#8d8d8d]" />
          <button aria-label="矩形渐变" className="size-5 border-2 border-[#dcdde0] bg-radial from-[#fff] to-[#7d7d7d]" />
          <button aria-label="路径渐变" className="size-5 border-2 border-[#dcdde0] bg-conic-150 from-[#e8e8e8] to-[#777]" />
        </div>
        <div className="mt-[13px] flex items-center justify-end">
          <Ico s={27} vb="0 0 27 27" className="mr-[7px] text-[#4b5062]"><circle cx="13.500" cy="13.500" r="12.500" /><circle cx="13" cy="19" r="2.500" /></Ico>
          <div className="flex h-[23px] w-[91px] border border-[#dfe1e7] bg-white">
            <button aria-label="减小角度" className="grid w-[23px] place-items-center"><Ico s={8} vb="0 0 8 8" sw={2}><path d="M0 4h8" /></Ico></button>
            <input aria-label="角度" defaultValue="0.0°" className="w-11 border-x border-[#dfe1e7] pl-[3px] text-[13px] text-[#8a8fa0] outline-none" />
            <button aria-label="增大角度" className="grid w-[23px] place-items-center"><Ico s={8} vb="0 0 8 8" sw={2}><path d="M0 4h8M4 0v8" /></Ico></button>
          </div>
        </div>
        <div className="mt-[9px] flex justify-end gap-1.5">
          <svg aria-hidden="true" width="88" height="30" className="mr-[3px]"><defs><linearGradient id="gb"><stop offset="0" stopColor="#555" /><stop offset="1" stopColor="#262626" /></linearGradient></defs><path d="M0 2h82v15H0z" fill="url(#gb)" /><path d="M75 17l6-5 7 5v12H75z" fill="#222" /></svg>
          <button aria-label="添加光圈" className="grid size-[30px] place-items-center border border-[#dcdde2] bg-white"><Ico s={18} vb="0 0 18 18" className="text-[#a2a4ab]"><path d="M4.500 15.500v-10l4-4 4 4v10z" /><path d="M6.500 13.500v-7l2-2 2 2v7z" fill="#ccc" /><path d="M12.500 9.500v8M8.500 13.500h8" stroke="#6aa52a" strokeWidth="2" /></Ico></button>
          <button aria-label="删除光圈" className="grid size-[30px] place-items-center border border-[#dcdde2] bg-white"><Ico s={18} vb="0 0 18 18" className="text-[#a2a4ab]"><path d="M4.500 15.500v-10l4-4 4 4v10z" /><path d="M6.500 13.500v-7l2-2 2 2v7z" fill="#ccc" /><path d="M9 11l6 6M15 10l-5 8" stroke="#e0502c" strokeWidth="1.500" /></Ico></button>
        </div>
        <button aria-label="色标颜色" className="mt-[7px] ml-auto flex h-5 w-[70px] items-center gap-[5px] border border-[#cfd1d8] bg-white px-px">
          <span className="h-3.5 w-[54px] bg-[#595959]" /><Caret />
        </button>
        <div className="-mt-[7px]">
          <Slider label="位置" value={0} />
          <Slider label="透明度" value={0} />
          <Slider label="亮度" value={35} />
        </div>
        <label className="mt-[17px] flex h-6 items-center gap-1 pl-3 text-[#9a9eab]">
          <input type="checkbox" disabled className="size-3.5" /><span className="whitespace-nowrap">与形状一起旋转(<u>W</u>)</span>
        </label>
        <div className="mt-[35px] flex h-[25px] items-center justify-between">
          <Heading>线条</Heading>
          <div className="relative w-[110px]">
            <select aria-label="线条" className="h-[25px] w-full appearance-none rounded-sm border border-[#cfd1d8] bg-white pr-3 text-center outline-none"><option>无</option></select>
            <span className="pointer-events-none absolute top-[11px] right-1"><Caret /></span>
          </div>
        </div>
        <div className="mt-[9px] flex flex-col pl-3 text-[#23273a]">
          {[['无线条', 'N'], ['实线', 'S'], ['渐变线', 'G'], ['自动', 'U']].map(([t, k]) => (
            <label key={k} className="flex h-[25px] items-center gap-1">
              <input type="radio" name="stroke" defaultChecked={k === 'U'} className="size-3.5 appearance-none rounded-full border border-[#9a9eae] bg-white checked:bg-[#23273a] checked:shadow-[inset_0_0_0_3px_white]" />
              <span>{t}(<u>{k}</u>)</span>
            </label>
          ))}
        </div>
      </div>
    </aside>
  );
}

function SideBar() {
  const b = 'grid h-8 w-[31px] place-items-center';
  return (
    <div className="flex w-9 shrink-0 flex-col items-end gap-1 bg-[#f5f7fa] text-[#3d4252]">
      <span className="mt-2.5 mr-1.5 mb-[9px] h-1 w-5 border-y border-[#b9bcc6]" />
      <button aria-label="推荐" className={b}><Ico s={16}><path d="M5 9c0-4 4-8 10-8 0 6-4 10-8 10zM5 6H2L.5 9 4 9.500M10 11v3l-3 1.500L6.500 12M1 15l3-3M3 15l2-2" /><circle cx="10.500" cy="5.500" r="1.500" /></Ico></button>
      <button aria-label="选择" className={b}><Ico s={16}><path d="M3 .5v13l3.500-3 2.500 5 2-1-2.500-5h5z" /></Ico></button>
      <button aria-label="属性" className={`${b} bg-[#dadde6] text-[#23273a]`}><Ico s={16} sw={1.3}><circle cx="2.500" cy="3.500" r="2" /><path d="M4.500 3.500H16M0 12.500h9.500M13.500 12.500H16" /><circle cx="11.500" cy="12.500" r="2" /></Ico></button>
      <button aria-label="转换" className={`${b} text-[#9498a8]`}><Ico s={16}><path d="M1.500 1h2v2h-2zM5.500 1.500h10v2h-10zM1.500 5.500h2v10h-2zM14 6v7H7M12 8l2-2 2 2M9 11l-2 2 2 2" /></Ico></button>
      <button aria-label="模板" className={b}><Ico s={16} sw={1.2}><path d="M2.500 8v6.500H6M3 1h10l2.500 3.500c.3 2-1.500 2.500-3 2M3 1L.7 4.500C.5 7 4 7.500 5 5.500 6 7 7.500 7.200 8.500 6.500" /><path d="M11.500 16c-3-.5-4.500-2-4.700-4.500 1.300.1 2.200.5 3 1.300C9.500 10.500 10.300 8.700 12 7.500c1.200 1.500 1.400 3 .8 4.800.7-.5 1.600-.9 2.900-.9-.1 2.600-1.500 4.300-4.200 4.600z" fill="#3d4252" stroke="none" /></Ico></button>
      <button aria-label="灵感" className={b}><Ico s={16} sw={1.2}><path d="M5 13.500a6.500 6.500 0 1 1 6 0v2H5z" /><path d="M9 3.500L5.500 8H8l-1 4 4-5H8.500z" /></Ico></button>
      <button aria-label="帮助" className={b}><Ico s={16} sw={1.2}><path d="M8 3v11L1 12.500V1.500L8 3l7-1.500V8M8 14l3-.5" /><circle cx="12.500" cy="10.500" r="2" /><path d="M14 12l2 2.500" /></Ico></button>
      <div className="mt-auto flex h-[43px] w-full items-center justify-center gap-[3px] border-t border-[#dfe1e7] pt-1.5 pl-1">
        {[0, 1, 2].map((i) => <span key={i} className="size-[5px] rounded-full border border-[#4b5062]" />)}
      </div>
    </div>
  );
}

function StatusBar() {
  return (
    <footer className="flex h-[25px] shrink-0 items-center border-t border-[#dfe1e7] bg-[#f5f7fa] pt-px pl-[15px] text-[#33384b]">
      <button aria-label="脚本"><Ico s={16}><path d="M7 12.500H.5V1.500h14V6M3 14h5M11 6v8h-2M15.500 8.500h-3v3h3v3h-3" /></Ico></button>
      <Sep className="mr-2 ml-[15px] h-4 bg-[#e6e7eb]" />
      <button className="flex items-center gap-[3px] text-[#23273a]"><Ico s={16}><path d="M5 15.500H1.500V.5h5l2 2h5V5M4 4.500h3M4 7.500h1" /><circle cx="10" cy="10.500" r="5" /><path d="M8 7.500l2 2.500 2-2.500M10 10v4M8 10.500h4M8 12.500h4" /></Ico>工资结算 <Caret up className="ml-1 text-[#6b7080]" /></button>
      <div className="ml-auto flex h-full items-center">
        <button aria-label="护眼模式"><Ico s={16}><path d="M.5 10C4 4.500 12 4.500 15.500 10 12 15.500 4 15.500.5 10zM8 1v2.500M2 2.500l1.500 2M14 2.500l-1.500 2" /><circle cx="8" cy="10" r="2.500" /></Ico></button>
        <button aria-label="阅读模式" className="ml-[7px] flex items-center gap-1"><Ico s={16}><path d="M5.500 1.500h5v13h-5zM.5 5.500h15v5H.5zM8 5.500v5" /></Ico><Caret /></button>
        <Sep className="mr-2.5 ml-[14px] h-4 bg-[#e6e7eb]" />
        <button aria-label="普通视图" className="grid h-[23px] w-[22px] place-items-center bg-[#dcdee6]"><Ico s={16}><path d="M.5 2.500h15v11H.5zM.5 6h15M.5 10h15M5.500 2.500v11M10.500 2.500v11" /></Ico></button>
        <button aria-label="分页预览" className="ml-[7px]"><Ico s={16}><path d="M1 .5h14v15H1zM4 3.500h8v9H4zM8 3.500v9" /></Ico></button>
        <button aria-label="页面布局视图" className="ml-2.5"><Ico s={16}><path d="M.5 1.500h15v13H.5zM4.500 1.500v7h11M9.500 1.500v7" /></Ico></button>
        <Sep className="mr-[9px] ml-3.5 h-4 bg-[#e6e7eb]" />
        <button className="flex items-center gap-1 text-[13px]">100% <Caret /></button>
        <button aria-label="缩小显示" className="ml-3"><Ico s={10} vb="0 0 10 10" sw={2}><path d="M0 5h10" /></Ico></button>
        <div className="relative ml-3 flex w-[145px] items-center">
          <input type="range" aria-label="显示比例" className="absolute inset-0 w-full opacity-0" />
          <span className="h-px w-[63px] bg-[#4b5062]" /><span className="size-3 rounded-full border border-[#4b5062] bg-white" />
        </div>
        <button aria-label="放大显示" className="ml-1"><Ico s={10} vb="0 0 10 10" sw={2}><path d="M0 5h10M5 0v10" /></Ico></button>
        <button aria-label="全屏" className="mr-[9px] ml-3.5"><Ico s={14} vb="0 0 14 14" sw={1.2}><path d="M4 .5H.5V4M.5.5l4 4M10 .5h3.500V4M13.500.5l-4 4M4 13.500H.5V10M.5 13.500l4-4M10 13.500h3.500V10M13.500 13.500l-4-4" /></Ico></button>
      </div>
    </footer>
  );
}

function Watermark() {
  return (
    <div className="pointer-events-none absolute right-1.5 bottom-1.5 z-30 flex items-center">
      <svg aria-hidden="true" width="42" height="38" viewBox="0 0 42 38">
        <defs>
          <linearGradient id="wm" x1="0" y1="1" x2="1" y2="0"><stop offset="0" stopColor="#4d8fd2" /><stop offset="1" stopColor="#8ccbe8" /></linearGradient>
          <linearGradient id="wg" x1="0" y1="1" x2="1" y2="0"><stop offset="0" stopColor="#d9e86a" /><stop offset="1" stopColor="#6cc684" /></linearGradient>
        </defs>
        <path d="M41 1C22-2 4 7 1 19c-2 7 3 11 9 11-5-5-3-13 5-19C22 5 31 2 41 1z" fill="url(#wm)" opacity=".85" />
        <path d="M5 36c18 3 34-5 36-20 0-3-1-5-2-7 0 8-6 15-17 18 4 2-4 8-17 9z" fill="url(#wg)" opacity=".85" />
        <path d="M24 16c-3-2-9 1-9 5 0 5 10 4 15-2 4-5 2-9-3-10-9-1-19 6-19 13" stroke="#6aaade" strokeWidth="2" fill="none" opacity=".85" />
      </svg>
      <div className="ml-0.5 flex flex-col">
        <span className="text-[22px] leading-6 font-medium text-[#4a92d6]/70">极光下载站</span>
        <span className="pb-1 pl-0.5 font-[Liberation_Sans] text-[16px] leading-5 font-bold text-[#5fbf62]/80">www.xz7.com</span>
      </div>
    </div>
  );
}

export default function App() {
  return (
    <div className="relative flex h-screen flex-col overflow-hidden bg-[#f5f7fa] font-[Open_Sans,Noto_Sans_CJK_SC,sans-serif] text-[12px]">
      <TitleBar />
      <MenuBar />
      <Ribbon />
      <main className="flex min-h-0 flex-1">
        <div className="flex min-w-0 flex-1 flex-col">
          <FormulaBar />
          <div className="flex min-h-0 flex-1">
            <div className="relative z-20 min-w-0 flex-1">
              <div className="absolute inset-0 overflow-hidden border-r border-[#dfe1e7]"><Sheet /></div>
              <Ranges />
              <Chart />
              <ChartButtons />
              <StylePopup />
              <Annotations />
            </div>
            <div className="flex w-[17px] flex-col items-end pl-[3px]">
              <span className="mt-1.5 mb-2 h-1 w-3 border-y border-[#8a8fa0]" />
              <div className="flex w-3.5 flex-1 flex-col items-center bg-[#e8e9ee] py-1.5">
                <Caret up /><span className="mt-2 h-[390px] w-3 rounded-full bg-[#d4d5de]" /><span className="mt-auto"><Caret /></span>
              </div>
            </div>
          </div>
          <SheetTabs />
        </div>
        <Panel />
        <SideBar />
      </main>
      <StatusBar />
      <Watermark />
      <button className="absolute right-[260px] bottom-6 z-30 h-[26px] w-[62px] rounded-md border border-[#777] bg-white text-[13px] whitespace-nowrap text-[#33384b] shadow-[0_1px_4px_rgba(0,0,0,0.5)]">CH ☽ 简</button>
    </div>
  );
}
